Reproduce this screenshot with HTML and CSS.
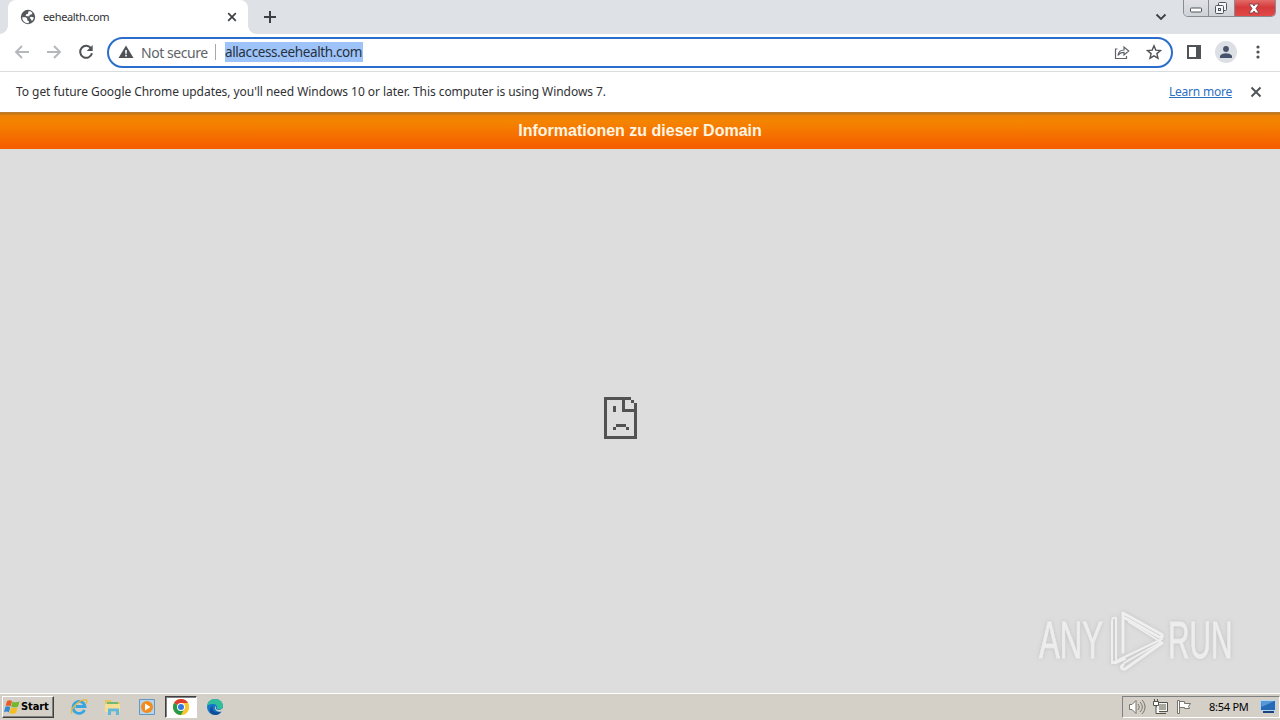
FILE: index.html
```html
<!DOCTYPE html>
<html lang="en">
<head>
<meta charset="utf-8">
<title>eehealth.com</title>
<link rel="stylesheet" href="styles.css">
</head>
<body>
<header class="tabstrip">
  <div class="tab">
    <svg class="globe" width="16" height="16" viewBox="0 0 16 16"><circle cx="8" cy="8" r="7.200" fill="#54585d"/><path d="M2.200 8.300h3.600l1.500 1.500v1.700l1.500.4v2.300C5 14.500 2.300 12 2.200 8.300zM8.500 2.300h2l2 1.700-1 1.500-1.800.3-.4 1.500H6.700L5.500 6.500l.8-1.300 1.700-.4zM9.500 8.500l2-.8 2.300.8c-.2 1.500-.9 2.700-1.900 3.500l-1-1.800z" fill="#fff"/></svg>
    <span class="tab-title">eehealth.com</span>
    <svg class="tab-close" width="10" height="10" viewBox="0 0 10 10"><path d="m1.200 1.200 7.600 7.600m0-7.600L1.200 8.800" stroke="#3c4043" stroke-width="1.700"/></svg>
  </div>
  <svg class="new-tab" width="14" height="14" viewBox="0 0 14 14"><path d="M7 1v12M1 7h12" stroke="#3c4043" stroke-width="2"/></svg>
  <svg class="tab-search" width="12" height="8" viewBox="0 0 12 8"><path d="m1.500 1.500 4.500 4.500 4.500-4.500" fill="none" stroke="#3c4043" stroke-width="1.800"/></svg>
  <div class="window-buttons">
    <div class="wb min"><svg width="14" height="6" viewBox="0 0 14 6"><rect x="1.500" y="1" width="11" height="4" rx="1" fill="#fff" stroke="#50545b"/></svg></div>
    <div class="wb max"><svg width="14" height="14" viewBox="0 0 14 14"><g fill="#f5f6f8" stroke="#50545b"><rect x="4.500" y="1.500" width="8" height="8" rx="1"/><rect x="1.500" y="4.500" width="8" height="8" rx="1"/><rect x="4.500" y="7.500" width="2" height="2"/></g></svg></div>
    <div class="wb close"><svg width="12" height="11" viewBox="0 0 12 11"><path d="M1 1h3.500L6 3l1.500-2H11L8 5.500 11 10H7.500L6 8l-1.500 2H1l3-4.500z" fill="#fff" stroke="#70343a" stroke-width=".8"/></svg></div>
  </div>
</header>

<div class="toolbar">
  <svg class="nav back" width="16" height="14" viewBox="0 0 16 14"><path d="M15 7H2m6-6L2 7l6 6" fill="none" stroke="#b5b7ba" stroke-width="1.900"/></svg>
  <svg class="nav forward" width="16" height="14" viewBox="0 0 16 14"><path d="M1 7h13M8 1l6 6-6 6" fill="none" stroke="#b5b7ba" stroke-width="1.900"/></svg>
  <svg class="nav reload" width="16" height="16" viewBox="0 0 16 16"><path d="M13.200 4.500A6 6 0 1 0 14 9.300" fill="none" stroke="#505356" stroke-width="2"/><path d="M14.700 1v6H8.700z" fill="#505356"/></svg>
  <div class="omnibox">
    <svg class="warn" width="16" height="14" viewBox="0 0 16 14"><path d="M8 .5 15.500 13H.5z" fill="#505356"/><path d="M8 5v3.800m0 1v1.600" stroke="#fff" stroke-width="1.600"/></svg>
    <span class="security">Not secure</span>
    <span class="divider"></span>
    <span class="url">allaccess.eehealth.com</span>
    <svg class="share" width="16" height="16" viewBox="0 0 16 16"><path d="M3.500 5H1.500v9.500h11V12M4 11.500c.4-4 2.400-5.400 6-5.500V3l4.700 4-4.700 4V8.300c-3 0-4.700 1-6 3.200z" fill="none" stroke="#5f6368" stroke-width="1.200"/></svg>
    <svg class="star" width="16" height="16" viewBox="0 0 16 16"><path d="m8 1.800 1.800 4.300 4.700.4-3.600 3.100 1.100 4.600L8 11.800l-4 2.400 1.100-4.600-3.600-3.100 4.700-.4z" fill="none" stroke="#505356" stroke-width="1.400"/></svg>
  </div>
  <svg class="panel" width="14" height="14" viewBox="0 0 14 14"><path d="M1 1h12v12H1z" fill="none" stroke="#505356" stroke-width="2"/><path d="M9 1h4v12H9z" fill="#505356"/></svg>
  <div class="avatar"><svg width="12" height="12" viewBox="0 0 12 12"><circle cx="6" cy="3" r="2.900" fill="#47536b"/><path d="M0 12V9.800C1 7.900 4 7.200 6 7.200s5 .7 6 2.600V12z" fill="#47536b"/></svg></div>
  <svg class="more" width="4" height="14" viewBox="0 0 4 14"><g fill="#505356"><circle cx="2" cy="2" r="1.600"/><circle cx="2" cy="7" r="1.600"/><circle cx="2" cy="12" r="1.600"/></g></svg>
</div>

<div class="infobar">
  <span class="info-text">To get future Google Chrome updates, you'll need Windows 10 or later. This computer is using Windows 7.</span>
  <span class="learn">Learn more</span>
  <svg class="info-close" width="12" height="12" viewBox="0 0 12 12"><path d="m1.500 1.500 9 9m0-9-9 9" stroke="#505356" stroke-width="1.900"/></svg>
</div>

<main class="page">
  <div class="banner"><span>Informationen zu dieser Domain</span></div>
  <div class="content">
    <svg class="sad" width="34" height="42" viewBox="0 0 34 42" shape-rendering="crispEdges"><path d="M0 0h27v3H3v36h27V15H18V3h3v9h9V6h3v36H0zM27 3h3v3h-3zM9 9h3v6H9zM12 27h10v3H12zM9 30h3v3H9zM22 30h3v3h-3z" fill="#525252"/></svg>
    <div class="watermark">
      <span class="any">ANY</span>
      <svg width="60" height="64" viewBox="0 0 60 64"><g fill="none" stroke="#f3f3f3" stroke-linejoin="round" stroke-linecap="round"><path d="M14 43V4l38 21c3 2 1 4-2 3L16 9" stroke-width="3"/><path d="M7 9C4 8 3 9 3 13v41l50-24M20 13l32 20-37 21M3 54h4l9-4" stroke-width="2"/><path d="M53 34 16 60c-3 1-5-2-2-4" stroke-width="3"/><path d="M7 10v40" stroke-width="2"/></g></svg>
      <span class="run">RUN</span>
    </div>
  </div>
</main>

<footer class="taskbar">
  <div class="start">
    <svg width="17" height="16" viewBox="0 0 17 16"><path d="M3 2c2-1 3.500-1 5 .2L6.600 7.300C5 6.200 3.500 6.200 1.700 7z" fill="#e85b26"/><path d="M8.500 2.500c2 1.200 4 1 7 0L14 7.700c-2.300 1-4.500 1-6.900-.1z" fill="#75b82f"/><path d="M1.400 7.800c1.800-.9 3.200-.8 4.900.2l-1.500 5.400c-1.500-1-3-1-4.800-.2z" fill="#3488cf"/><path d="M7 8.400c2 1 4.200 1 6.600.2l-1.500 5.500c-2.200.9-4.300.9-6.500-.2z" fill="#f5bd22"/></svg>
    <span class="start-label">Start</span>
  </div>
  <div class="launcher"><svg width="18" height="18" viewBox="0 0 18 18"><path d="M14.500 12A6 6 0 1 1 15 8.500H5.500" fill="none" stroke="#38a5e0" stroke-width="2.800"/><path d="M2 15.500C-1 11 10 1 16 2c1.500.5 1 2 0 3.500" fill="none" stroke="#e5b83c" stroke-width="1.400"/></svg></div>
  <div class="launcher"><svg width="18" height="18" viewBox="0 0 18 18"><path d="M1 2h6l1 2h8v10H1z" fill="#e7c65d"/><path d="M3 4h11v3H3z" fill="#71b875"/><path d="M1 6h15v8H1z" fill="#f6df92"/><path d="M4 17v-6.500h11V17h-3v-3.500H7V17z" fill="#62b7de"/></svg></div>
  <div class="launcher"><svg width="18" height="18" viewBox="0 0 18 18"><path d="M1.500 1.500h15v15h-15z" fill="#b6d5ec" stroke="#6199c4"/><circle cx="9" cy="9" r="6" fill="#f28c1c"/><path d="m7 5.500 5.500 3.500L7 12.500z" fill="#fff"/></svg></div>
  <div class="launcher active"><svg width="16" height="16" viewBox="0 0 16 16"><circle cx="8" cy="8" r="8" fill="#f8c62a"/><path d="M8 8 1.070 4A8 8 0 0 1 14.930 4z" fill="#df3d30"/><path d="M8 8 1.070 4A8 8 0 0 0 8 16l3.500-6z" fill="#289b4b"/><path d="M8 4h6.930A8 8 0 0 1 8 16l3.500-6z" fill="#f8c62a"/><circle cx="8" cy="8" r="4" fill="#fff"/><circle cx="8" cy="8" r="3" fill="#3478df"/></svg></div>
  <div class="launcher"><svg width="18" height="18" viewBox="0 0 18 18"><circle cx="9" cy="9" r="8" fill="#1677c8"/><path d="M1 8C2 3 5 1 9 1c5 0 8 3 8 7 0 3-3 4-6 3 1-3-1-5-4-5-2 0-5 .5-6 2z" fill="#31bf9b"/><path d="M7 8c-2 4 2 7 8 6-2 3-6 4-9 2s-3-6 1-8z" fill="#124e98"/><path d="M9.500 8c1 1 .5 2 .5 3 2 2 5 1 7-1v3c-3 2-8 0-8-3z" fill="#d4d0c8"/></svg></div>
  <div class="tray">
    <svg class="sound" width="18" height="16" viewBox="0 0 18 16"><path d="M1.500 5.500H4l4-4v13l-4-4H1.500z" fill="#fff" stroke="#77736d"/><path d="M10 5c1.500 2 1.500 4 0 6m2-8c3 3 3 7 0 10m2-12c4 4 4 10 0 14" fill="none" stroke="#77736d"/></svg>
    <svg class="network" width="17" height="16" viewBox="0 0 17 16"><path d="M4.500 3.500h11v9h-11zM7 14.500h7" fill="#f6f6f2" stroke="#55534e"/><path d="M7 5h7v6H7z" fill="#aaa79f"/><path d="M1.500 2.500h5v4h-5zM2.500 0v2m3-2v2M4 7v7.500h4" fill="#fff" stroke="#55534e"/></svg>
    <svg class="flag" width="17" height="16" viewBox="0 0 17 16"><path d="M1.500 1.500h2v13h-2zM3.500 2.500h5v2h6l-2 3 1 2h-5v-1h-5z" fill="#fff" stroke="#77736d"/></svg>
    <span class="clock">8:54 PM</span>
    <svg class="desktop" width="16" height="15" viewBox="0 0 16 15"><path d="M.5 1.500h15v10H.5z" fill="#2669b5" stroke="#b6d5ed"/><path d="M1 2h13.500L1.500 8z" fill="#5797d7"/><path d="M3 12h11v2H3z" fill="#17437e"/></svg>
  </div>
</footer>
</body>
</html>
```
FILE: styles.css
```css
* { box-sizing: border-box; }
body { margin: 0; width: 1280px; height: 720px; overflow: hidden; display: flex; flex-direction: column; background: #fff; font-family: "Noto Sans", "Open Sans", sans-serif; color: #303134; }
svg { display: block; flex: none; }
span { white-space: nowrap; }

.tabstrip { height: 34px; display: flex; align-items: flex-start; background: #dee1e6; padding-left: 8px; }
.tab { position: relative; width: 240px; height: 34px; display: flex; align-items: center; background: #fff; border-radius: 8px 8px 0 0; padding: 0 11px 0 12px; }
.tab::before, .tab::after { content: ""; position: absolute; bottom: 0; width: 8px; height: 8px; }
.tab::before { left: -8px; background: radial-gradient(circle at 0 0, #dee1e6 7.5px, #fff 8px); }
.tab::after { right: -8px; background: radial-gradient(circle at 100% 0, #dee1e6 7.5px, #fff 8px); }
.tab-title { margin-left: 7px; padding-bottom: 1px; font-size: 11px; letter-spacing: -.35px; }
.tab-close { margin-left: auto; }
.new-tab { margin: 10px 0 0 15px; }
.tab-search { margin: 13px 16px 0 auto; }
.window-buttons { display: flex; width: 93px; height: 17px; margin-right: 4px; border: 1px solid #898c92; border-top: 0; border-radius: 0 0 5px 5px; overflow: hidden; }
.wb { display: flex; align-items: center; justify-content: center; background: linear-gradient(#dfe1e5, #cfd3d8); border-right: 1px solid #898c92; }
.min { width: 25px; padding-top: 4px; }
.max { width: 26px; padding-right: 2px; }
.close { flex: 1; border: 0; background: linear-gradient(#e36b68, #d63a3b 45%, #e04a48); padding-right: 2px; }

.toolbar { height: 38px; display: flex; align-items: center; border-bottom: 1px solid #dadce0; padding: 0 20px 0 14px; }
.nav { margin-right: 16px; position: relative; top: -1px; }
.reload { margin-right: 13px; }
.omnibox { width: 1066px; height: 31px; display: flex; align-items: center; border: 2px solid #2a6dca; border-radius: 16px; padding: 0 9px; }
.warn { margin-bottom: 2px; }
.security { margin-left: 7px; width: 67px; font-size: 14px; letter-spacing: -.45px; color: #606367; }
.divider { width: 1px; height: 16px; background: #a5a8ac; margin: 0 9px 2px 7px; }
.url { height: 20px; line-height: 20px; margin-bottom: 2px; font-size: 13.5px; letter-spacing: -.39px; width: 138px; background: #9ec3f8; color: #26313d; }
.share { margin: 0 0 1px auto; }
.star { margin: 0 0 1px 16px; }
.panel { margin: 0 0 1px 14px; }
.avatar { display: flex; align-items: center; justify-content: center; width: 22px; height: 22px; border-radius: 50%; background: #dce0e5; margin: 0 0 2px 14px; }
.more { margin: 0 0 1px 19px; }

.infobar { height: 40px; display: flex; align-items: center; padding: 0 18px 0 16px; }
.info-text { font-size: 12px; letter-spacing: -.053px; padding-bottom: 2px; }
.learn { margin-left: auto; width: 63px; font-size: 12px; letter-spacing: -.23px; padding-bottom: 2px; color: #2c70bf; text-decoration: underline; }
.info-close { margin-left: 18px; }

.page { height: 581px; display: flex; flex-direction: column; }
.banner { height: 37px; display: flex; align-items: center; justify-content: center; background: linear-gradient(#c08028 0, #bd771d 2px, #ed8209 3px, #f48500 9px, #f65c00 100%); color: #fff5e3; font: bold 16px "Liberation Sans", sans-serif; }
.content { position: relative; flex: 1; background: #ddd; }
.sad { position: absolute; left: 604px; top: 248px; }
.watermark { position: absolute; left: 1038px; top: 460px; height: 64px; display: flex; align-items: center; color: #f1f1f1; font: 51px/64px "Liberation Sans", sans-serif; filter: drop-shadow(0 0 2px #bbb); opacity: .82; -webkit-text-stroke: .8px #f1f1f1; }
.watermark svg { position: absolute; left: 71px; top: 0; }
.any, .run { transform: scaleX(.61); transform-origin: left center; position: absolute; }
.any { left: 1px; }
.run { left: 130px; transform: scaleX(.585); }

.taskbar { height: 27px; display: flex; align-items: center; background: #d4d0c8; box-shadow: inset 0 1px #fff; padding: 0 0 0 2px; }
.start { width: 52px; height: 22px; display: flex; align-items: center; padding-left: 1px; border: 1px solid; border-color: #fff #404040 #404040 #fff; box-shadow: inset -1px -1px #808080; margin-right: 9px; }
.start-label { font: bold 11px "DejaVu Sans Condensed", "DejaVu Sans", sans-serif; color: #000; letter-spacing: -.1px; }
.launcher { width: 32px; height: 22px; display: flex; align-items: center; justify-content: center; margin-right: 2px; }
.active { background: #fff; border: 1px solid; border-color: #404040 #fff #fff #404040; box-shadow: inset 1px 1px #808080; }
.tray { width: 158px; height: 22px; display: flex; align-items: center; margin-left: auto; padding: 0 3px 0 5px; border: 1px solid; border-color: #808080 #fff #fff #808080; }
.network { margin-left: 6px; }
.flag { margin-left: 7px; }
.clock { margin-left: 16px; width: 40px; font-size: 11px; color: #000; letter-spacing: -.25px; }
.desktop { margin-left: auto; }
```
